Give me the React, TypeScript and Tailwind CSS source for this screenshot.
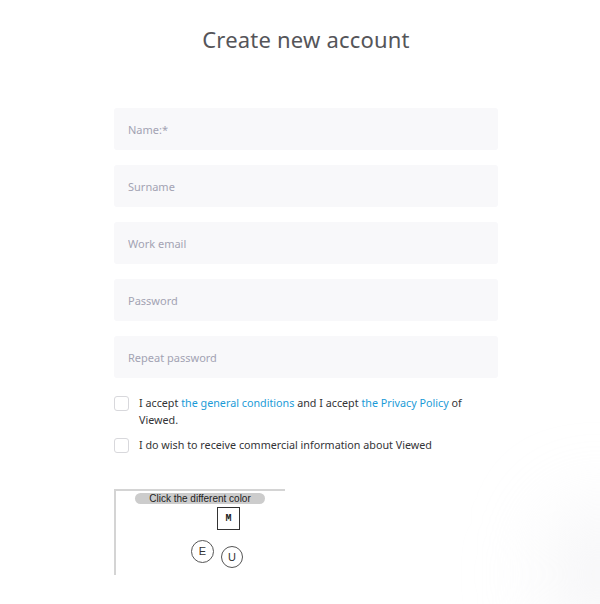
import React from 'react';

const fields = ['Name:*', 'Surname', 'Work email', 'Password', 'Repeat password'];

export default function App() {
  return (
    <div className="relative w-[600px] h-[604px] overflow-hidden bg-white font-['Noto_Sans',sans-serif]">
      {/* faint corner shadow */}
      <div className="absolute right-[-50px] bottom-[-40px] w-[100px] h-[140px] rounded-full bg-gray-200/40 blur-2xl" />

      <div className="ml-[114px] w-[384px] pt-[24px]">
        <h1 className="text-center text-[22px] leading-[30px] text-[#555559] tracking-[0.2px]">
          Create new account
        </h1>

        <form className="mt-[54px] flex flex-col gap-[15px]">
          {fields.map((f) => (
            <input
              key={f}
              type={f.includes('assword') ? 'password' : 'text'}
              placeholder={f}
              className="h-[42px] w-full rounded-[3px] bg-[#f8f8fa] px-[14px] text-[11px] text-gray-700 placeholder:text-[#a3a3b3] outline-none"
            />
          ))}
        </form>

        <div className="mt-[17px] flex flex-col gap-[8px] text-[10.75px] leading-[17px] text-[#333336]">
          <label className="flex items-start gap-[10px]">
            <span className="mt-[1px] h-[15px] w-[15px] shrink-0 rounded-[3px] border border-[#d8d8dc] bg-white" />
            <span className="pr-[20px]">
              I accept <a href="#" className="text-[#1a9bd7]">the general conditions</a> and I accept{' '}
              <a href="#" className="text-[#1a9bd7]">the Privacy Policy</a> of Viewed.
            </span>
          </label>
          <label className="flex items-start gap-[10px]">
            <span className="mt-[1px] h-[15px] w-[15px] shrink-0 rounded-[3px] border border-[#d8d8dc] bg-white" />
            <span>I do wish to receive commercial information about Viewed</span>
          </label>
        </div>

        {/* captcha */}
        <div className="relative mt-[35px] h-[86px] w-[171px] border-l-2 border-t-2 border-[#d4d4d4] font-['Liberation_Sans',sans-serif]">
          <div className="absolute left-[19px] top-[2px] flex h-[11px] w-[130px] items-center justify-center rounded-full bg-[#cccccc] text-[10px] leading-none text-[#222]">
            Click the different color
          </div>
          <div className="absolute left-[101px] top-[16px] flex h-[23px] w-[23px] items-center justify-center border border-[#333] text-[10px] font-bold text-[#222] font-['Liberation_Mono',monospace]">
            M
          </div>
          <div className="absolute left-[75px] top-[49px] flex h-[23px] w-[23px] items-center justify-center rounded-full border border-[#555] text-[11px] text-[#333]">
            E
          </div>
          <div className="absolute left-[105px] top-[55px] flex h-[22px] w-[22px] items-center justify-center rounded-full border border-[#555] text-[11px] text-[#333]">
            U
          </div>
        </div>
      </div>
    </div>
  );
}
